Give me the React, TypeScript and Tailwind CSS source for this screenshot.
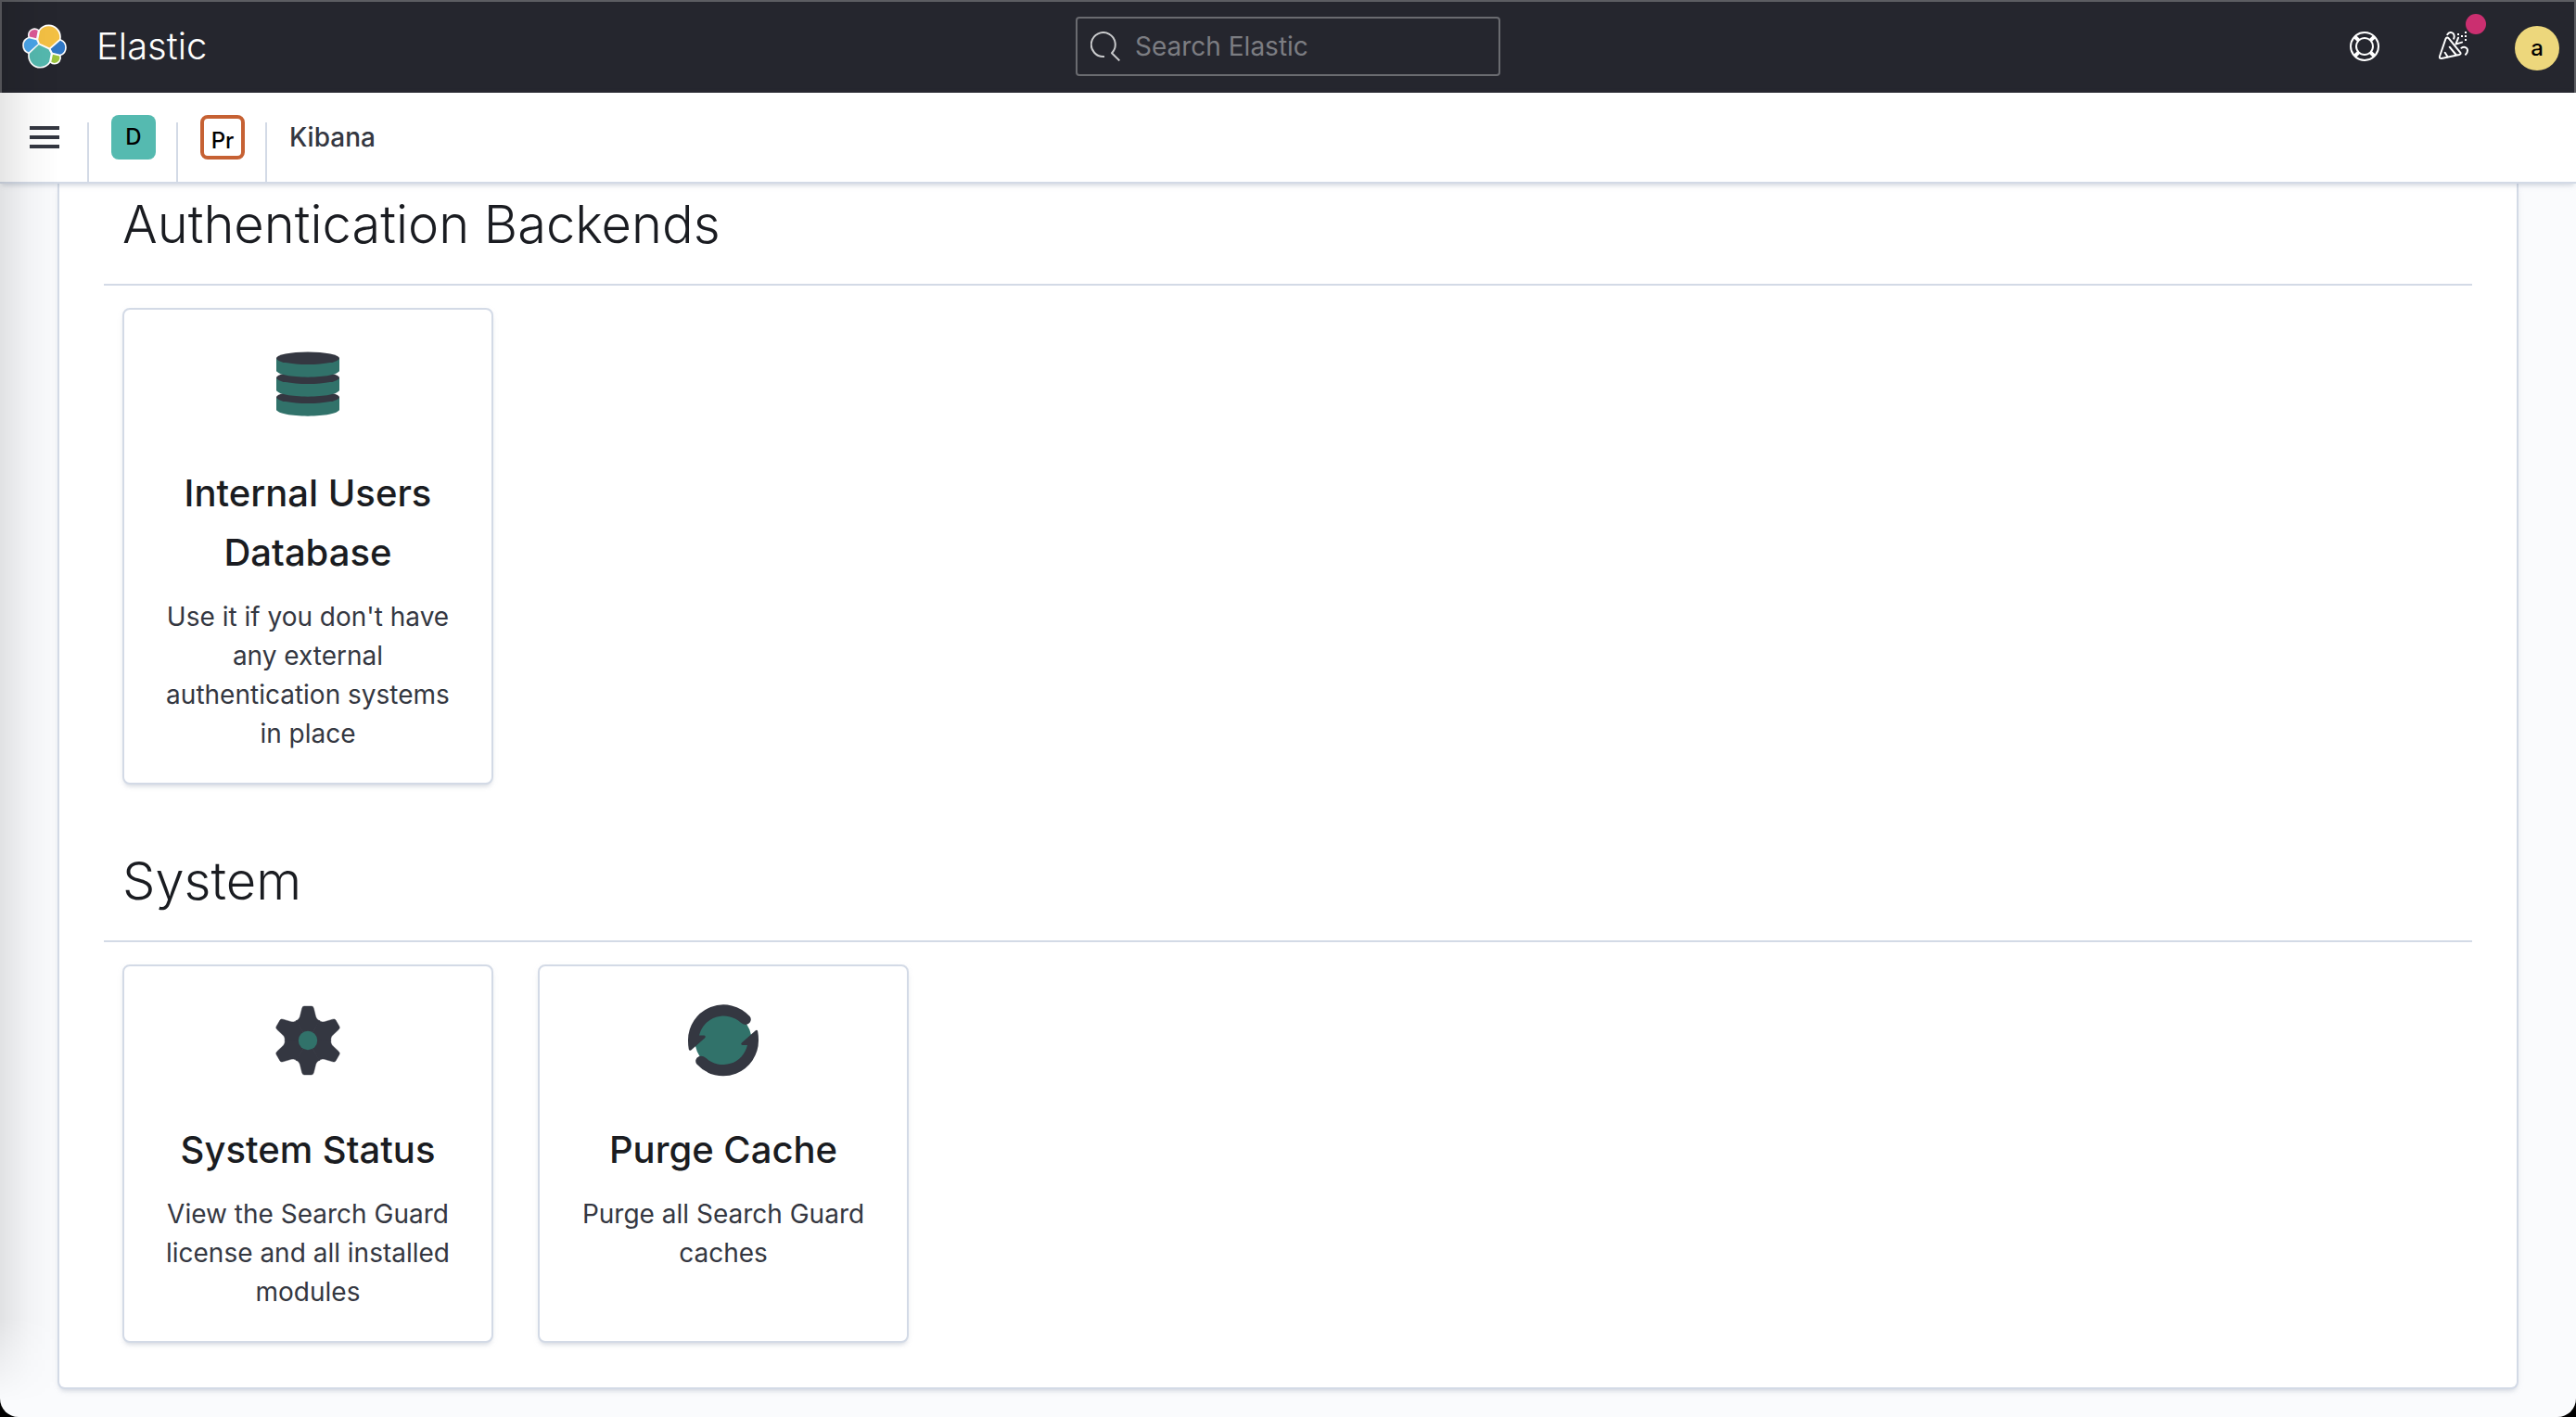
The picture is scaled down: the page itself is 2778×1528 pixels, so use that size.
import type { ReactNode } from "react";

function ElasticLogo() {
  const cells: [string, string][] = [
    ["#F4C144", "M12.58 13.787l7.002 3.211 7.066-6.213a7.849 7.849 0 00.152-1.557c0-4.287-3.464-7.775-7.723-7.775a7.7 7.7 0 00-6.365 3.368l-1.176 6.121 1.044 2.845z"],
    ["#55B9AF", "M5.333 21.228A7.964 7.964 0 005.18 22.8c0 4.3 3.475 7.798 7.745 7.798a7.73 7.73 0 006.394-3.397l1.166-6.1-1.556-2.985-7.03-3.211-6.566 6.323z"],
    ["#DD5A97", "M5.289 9.082l4.799 1.137 1.05-5.472a3.79 3.79 0 00-6.051 3.041c0 .454.073.893.202 1.294z"],
    ["#4AA4E8", "M4.872 10.23C2.727 10.941 1.235 12.997 1.235 15.27c0 2.214 1.36 4.19 3.4 4.97l6.734-6.11-1.236-2.651-5.261-1.249z"],
    ["#9CC53E", "M20.873 27.201a3.759 3.759 0 002.28.775 3.79 3.79 0 003.6-4.985l-4.795-1.125-1.085 5.335z"],
    ["#3078C6", "M21.848 20.563l5.28 1.238a5.34 5.34 0 003.636-5.041 5.32 5.32 0 00-3.394-4.96l-6.904 6.063 1.382 2.7z"],
  ];
  return (
    <svg viewBox="0 0 32 32" className="size-12" aria-hidden="true">
      {cells.map(([color, d]) => (
        <path key={color} d={d} fill="#fff" stroke="#fff" strokeWidth="2.2" strokeLinejoin="round" />
      ))}
      {cells.map(([color, d]) => (
        <path key={color} d={d} fill={color} />
      ))}
    </svg>
  );
}

function SearchIcon() {
  return (
    <svg viewBox="0 0 32 32" className="size-8 shrink-0" fill="none" stroke="#c9cacc" strokeWidth="2" aria-hidden="true">
      <path d="M15 27A13 13 0 1 1 23 23.2L31.3 31.4" strokeLinejoin="round" />
    </svg>
  );
}

function HelpIcon() {
  return (
    <svg viewBox="0 0 16 16" className="size-8" fill="#fff" aria-hidden="true">
      <path d="M13.6 12.186l-1.357-1.358c-.025-.025-.058-.034-.084-.056.53-.794.84-1.746.84-2.773a4.977 4.977 0 00-.84-2.772c.026-.02.059-.03.084-.056L13.6 3.813a6.96 6.96 0 010 8.373zM8 15a6.956 6.956 0 01-4.186-1.4l1.358-1.358c.025-.025.035-.057.055-.084C6.02 12.688 6.974 13 8 13a4.978 4.978 0 002.773-.84c.02.026.03.058.056.083l1.357 1.358A6.956 6.956 0 018 15zm-5.601-2.813a6.963 6.963 0 010-8.373l1.359 1.358c.024.025.057.035.084.055A4.97 4.97 0 003 8c0 1.027.31 1.98.842 2.773-.027.02-.06.031-.084.055l-1.36 1.358zm5.6-.187A4 4 0 118 4a4 4 0 010 8zM8 1c1.573 0 3.019.525 4.187 1.4l-1.358 1.358c-.025.025-.035.057-.056.084A4.979 4.979 0 008 3a4.979 4.979 0 00-2.773.842c-.02-.027-.03-.059-.055-.084L3.814 2.4A6.957 6.957 0 018 1zm0-1a8.001 8.001 0 10.003 16.002A8.001 8.001 0 008 0z" />
    </svg>
  );
}

function CheerIcon() {
  return (
    <svg viewBox="0 0 32 32" className="size-8" fill="none" stroke="#fff" strokeWidth="2" strokeLinecap="round" strokeLinejoin="round" aria-hidden="true">
      <path d="M10.8 7.4L23.2 22.6Q24.3 24.4 22 25L3 29Q.4 29.2 1 26.8L7.4 8Q8.8 5.4 10.8 7.4z" />
      <path d="M11.7 16.7L18.6 25M6.7 22.8L9.6 27.2M9.3 3.2C11 .6 14 .4 15.6 2.2Q17.4 4.4 16.2 7.6M24.4 17.8C27 16 30 16.8 30.8 19Q31.6 22 29 24.8M21 6.8L18.4 13.6L25 11.6" />
      <path fill="#fff" stroke="none" d="M20 2h2v2h-2zM28 0h2v2h-2zM24 4h2v2h-2zM28 4h2v2h-2zM28 8h2v2h-2z" />
    </svg>
  );
}

function DatabaseIcon() {
  return (
    <svg viewBox="0 0 80 80" className="size-20" aria-hidden="true">
      {[54.3, 33.3, 12.3].map((y) => (
        <g key={y} transform={`translate(40 ${y})`}>
          <path fill="#31726A" d="M-34 0V13.8C-32 17.6-18 20.4 0 20.4S32 17.6 34 13.8V0z" />
          <ellipse rx="34" ry="6.8" fill="#343741" />
        </g>
      ))}
    </svg>
  );
}

function GearIcon() {
  return (
    <svg viewBox="-40 -40 80 80" className="size-20" aria-hidden="true">
      {[0, 60, 120, 180, 240, 300].map((a) => (
        <path
          key={a}
          transform={`rotate(${a})`}
          fill="#343741"
          stroke="#343741"
          strokeWidth=".4"
          d="M0 0L-12.65-21.3C-10-22.6-9-24.2-8.5-26L-6.4-34.6Q-5.8-37-4-37H4Q5.8-37 6.4-34.6L8.5-26C9-24.2 10-22.6 12.65-21.3z"
        />
      ))}
      <circle r="10.2" fill="#31726A" />
    </svg>
  );
}

function RefreshIcon() {
  const arrow =
    "M14 34.6A27 27 0 0 1 58.6 20.6Q61.2 22.9 64 22.9C69 22.6 71.4 17.4 68.6 14A38.2 38.2 0 0 0 2 40Q2 45 2.8 49.4Q3.4 51.4 5.2 50.4L20.2 37.2Q21.6 35 19.4 34.6z";
  return (
    <svg viewBox="0 0 80 80" className="size-20" aria-hidden="true">
      <circle cx="40" cy="40" r="30.6" fill="#31726A" />
      <path d={arrow} fill="#343741" />
      <path d={arrow} fill="#343741" transform="rotate(180 40 39.8)" />
    </svg>
  );
}

function Divider() {
  return <span className="h-16 w-0.5 self-end bg-[#d3dae6]" />;
}

function Section({ title, children }: { title: string; children: ReactNode }) {
  return (
    <section>
      <h2 className="border-b-2 border-[#d3dae6] px-5 pb-6 text-[56px] leading-[80px] font-light text-[#1a1c21]">
        {title}
      </h2>
      <div className="flex flex-wrap gap-12 px-5 pt-6">{children}</div>
    </section>
  );
}

function Card({ icon, title, text }: { icon: ReactNode; title: string; text: string }) {
  return (
    <article className="flex w-[400px] flex-col items-center rounded-lg border-2 border-[#d3dae6] bg-white px-10 pt-10 pb-8 text-center shadow-[0_4px_4px_-2px_rgba(152,162,179,0.3),0_2px_10px_-4px_rgba(152,162,179,0.3)]">
      {icon}
      <h3 className="mt-[46px] text-[40px] leading-[64px] font-medium text-[#1a1c21]">{title}</h3>
      <p className="mt-4 text-[28px] leading-[42px] text-[#343741]">{text}</p>
    </article>
  );
}

export default function App() {
  return (
    <div className="min-h-screen bg-black">
      <div className="relative min-h-screen overflow-hidden rounded-b-[20px] bg-[#fafbfd] font-[Inter,sans-serif]">
        <header className="relative z-10">
          <div className="grid h-[100px] grid-cols-[1fr_458px_1fr] items-center bg-[#25262e] px-[18px] shadow-[inset_2px_2px_0_#5c5d62,inset_-2px_0_0_#5c5d62]">
            <a href="#home" className="flex items-center gap-8 pl-1.5 text-[40px] leading-[48px] font-light text-white">
              <ElasticLogo />
              Elastic
            </a>
            <label className="flex h-16 items-center gap-4 rounded border-2 border-[#6a6b70] px-3.5">
              <SearchIcon />
              <input
                type="search"
                aria-label="Search Elastic"
                placeholder="Search Elastic"
                className="w-full min-w-0 bg-transparent text-[28px] text-white outline-none placeholder:text-[#7c7d82]"
              />
            </label>
            <div className="flex items-center justify-end">
              <button type="button" aria-label="Help" className="mr-16">
                <HelpIcon />
              </button>
              <button type="button" aria-label="What's new" className="relative mr-[50px]">
                <CheerIcon />
                <span className="absolute -top-[19px] -right-[19px] size-[22px] rounded-full bg-[#cb2f70]" />
              </button>
              <button type="button" aria-label="Account" className="mt-1 flex size-12 items-center justify-center rounded-full bg-[#edd77c] text-2xl font-medium text-black">
                a
              </button>
            </div>
          </div>
          <nav className="flex h-[98px] items-center border-b-2 border-[#d3dae6] bg-white shadow-[0_4px_4px_-2px_rgba(152,162,179,0.3),0_2px_10px_-4px_rgba(152,162,179,0.3)]">
            <button type="button" aria-label="Toggle navigation" className="mr-[30px] ml-8 flex w-8 flex-col gap-1.5">
              <span className="h-1 w-full bg-[#343741]" />
              <span className="h-1 w-full bg-[#343741]" />
              <span className="h-1 w-full bg-[#343741]" />
            </button>
            <Divider />
            <button type="button" className="mr-[22px] ml-6 flex size-12 items-center justify-center rounded-lg bg-[#55bab0] text-2xl font-medium text-black">
              D
            </button>
            <Divider />
            <button type="button" className="mr-[22px] ml-6 flex size-12 items-center justify-center rounded-lg border-4 border-[#c66133] pt-2 text-2xl font-medium text-black">
              Pr
            </button>
            <Divider />
            <span className="ml-6 text-[28px] font-medium text-[#343741]">Kibana</span>
          </nav>
        </header>
        <main className="mx-[62px] mb-[30px] flex flex-col gap-16 rounded-b-lg border-2 border-t-0 border-[#d3dae6] bg-white px-12 pt-1 pb-12 shadow-[0_4px_4px_-2px_rgba(152,162,179,0.3),0_2px_10px_-4px_rgba(152,162,179,0.3)]">
          <Section title="Authentication Backends">
            <Card
              icon={<DatabaseIcon />}
              title="Internal Users Database"
              text="Use it if you don't have any external authentication systems in place"
            />
          </Section>
          <Section title="System">
            <Card
              icon={<GearIcon />}
              title="System Status"
              text="View the Search Guard license and all installed modules"
            />
            <Card icon={<RefreshIcon />} title="Purge Cache" text="Purge all Search Guard caches" />
          </Section>
        </main>
        <div className="pointer-events-none absolute inset-y-0 left-0 z-20 w-16 bg-linear-to-r from-black/10 via-black/3 to-transparent mask-[linear-gradient(to_bottom,black_93%,transparent_99%)]" />
      </div>
    </div>
  );
}
